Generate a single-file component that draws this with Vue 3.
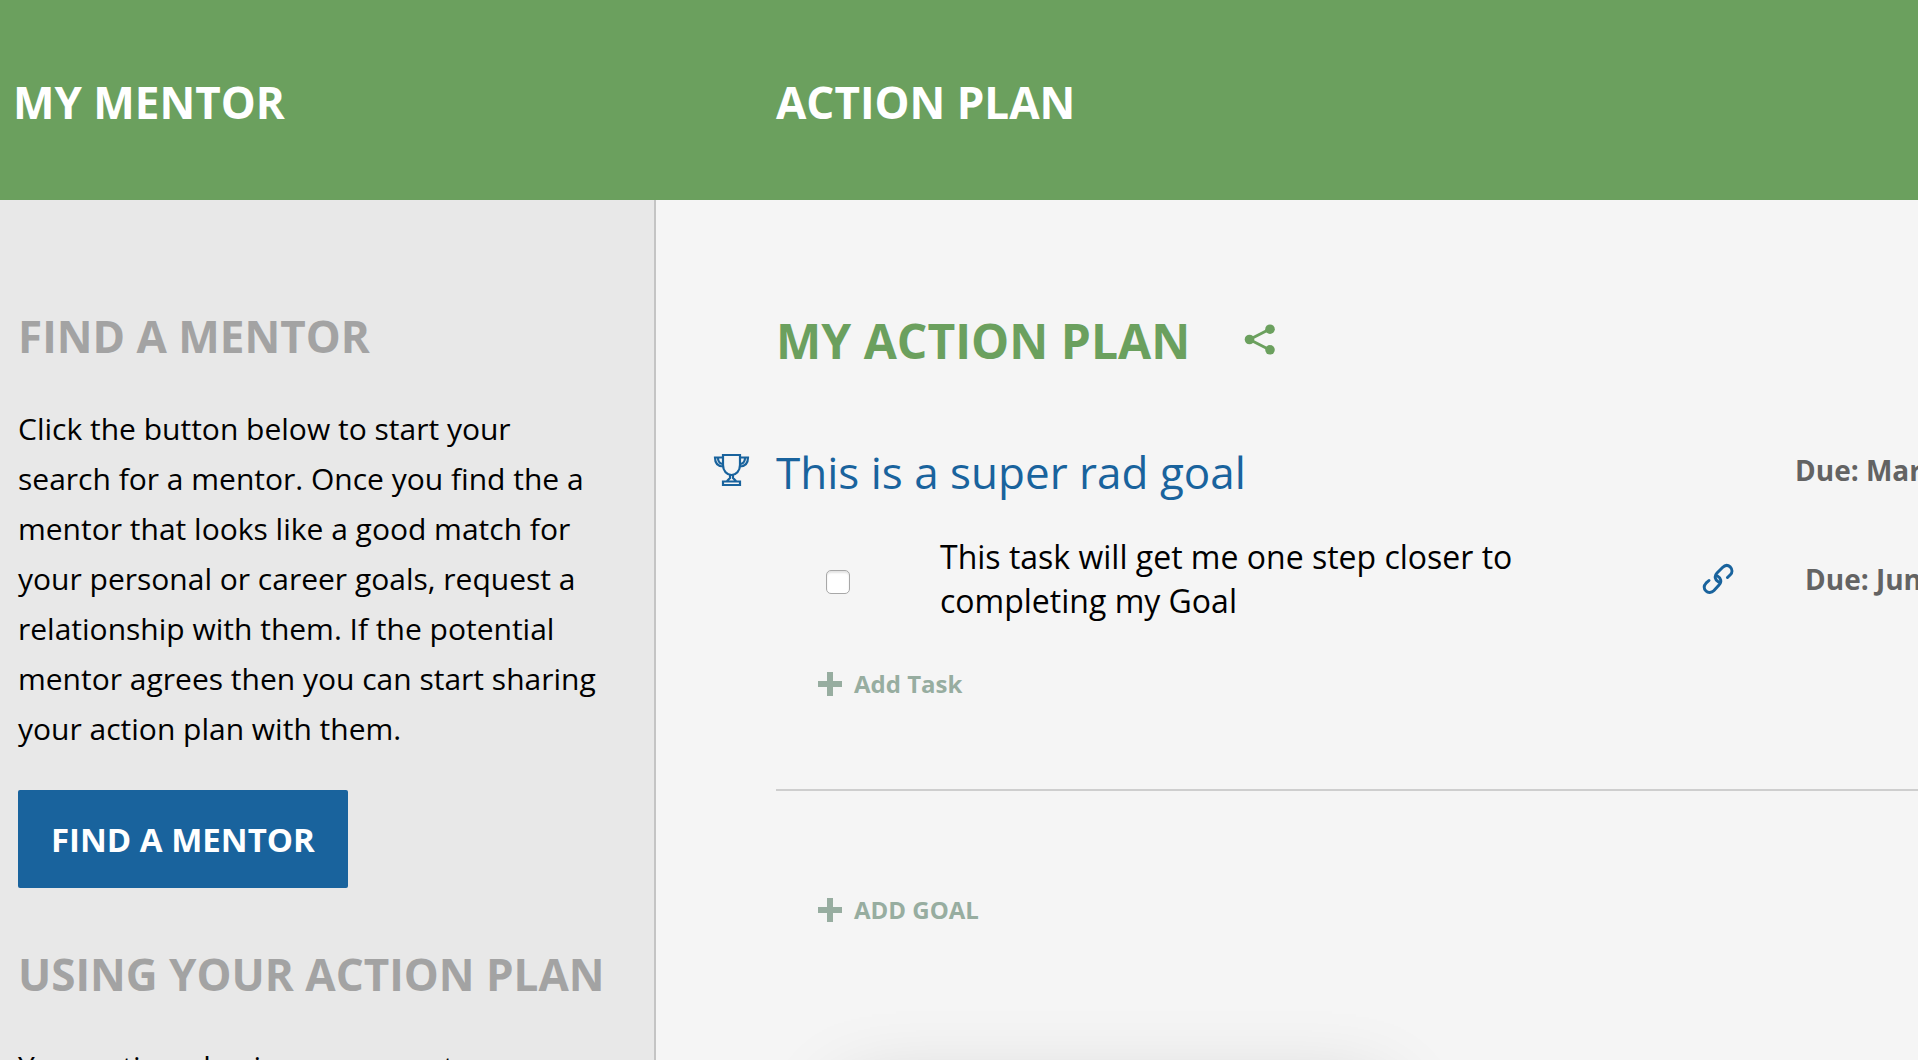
<script setup>
const dueGoal = 'Due: March 31'
const dueTask = 'Due: June 30'
</script>

<template>
  <div class="page">
    <header class="banner">
      <h1 class="banner-title side">My Mentor</h1>
      <h1 class="banner-title main">Action Plan</h1>
    </header>
    <div class="columns">
      <aside class="sidebar">
        <h2 class="side-title">Find a Mentor</h2>
        <p class="side-text">
          Click the button below to start your search for a mentor. Once you find the a mentor that
          looks like a good match for your personal or career goals, request a relationship with
          them. If the potential mentor agrees then you can start sharing your action plan with them.
        </p>
        <button type="button" class="find">Find a Mentor</button>
        <h2 class="side-title using">Using Your Action Plan</h2>
        <p class="side-text">Your action plan is your space to manage your goals.</p>
      </aside>
      <main class="plan">
        <div class="plan-head">
          <h2 class="plan-title">My Action Plan</h2>
          <button type="button" class="icon-button share" aria-label="Share action plan">
            <svg width="32" height="32" viewBox="0 0 32 32" fill="currentColor">
              <path d="M5.500 15.500 26 5M5.500 15.500 26 26" fill="none" stroke="currentColor" stroke-width="3" />
              <circle cx="5.500" cy="15.500" r="4.800" />
              <circle cx="26" cy="5.200" r="4.800" />
              <circle cx="26" cy="25.800" r="4.800" />
            </svg>
          </button>
        </div>
        <section class="goal">
          <div class="goal-row">
            <svg class="trophy" width="38" height="34" viewBox="0 0 38 34" fill="none" stroke="currentColor" stroke-width="2.200">
              <path d="M11 2H28V12C28 18 24 22 19.500 22S11 18 11 12Z" />
              <path d="M11 4.500H3C3 10 5 13.500 11.500 13.500M28 4.500H36C36 10 34 13.500 27.500 13.500" />
              <path d="M6 5C6 8 7 10 10 11M33 5C33 8 32 10 29 11" />
              <path d="M18 22V25L15 28M21 22V25L24 28M11 28.500H28V32H11Z" />
            </svg>
            <h3 class="goal-title">This is a super rad goal</h3>
            <span class="due">{{ dueGoal }}</span>
          </div>
          <div class="task">
            <input id="task-1" type="checkbox" class="tick" />
            <label for="task-1" class="task-text">This task will get me one step closer to completing my Goal</label>
            <button type="button" class="icon-button link" aria-label="Open task link">
              <svg width="34" height="34" viewBox="0 0 34 34" fill="none" stroke="currentColor" stroke-width="3" stroke-linecap="round">
                <path d="M17.500 20C14 18 13 14 16 11L21.500 5.500C24 3 27 3 29.300 5C31.500 7.300 31.500 10.500 29.300 12.800L26.500 15.500" />
                <path d="M16.500 14C20 16 21 20 18 23L13 28.500C10.500 31 7 31 5 29C2.500 26.700 2.700 23.500 5 21.200L8 18.500" />
              </svg>
            </button>
            <span class="due">{{ dueTask }}</span>
          </div>
          <button type="button" class="add">
            <svg width="24" height="24" viewBox="0 0 24 24" fill="currentColor"><path d="M9 0H15V9H24V15H15V24H9V15H0V9H9Z" /></svg>
            Add Task
          </button>
        </section>
        <button type="button" class="add add-goal">
          <svg width="24" height="24" viewBox="0 0 24 24" fill="currentColor"><path d="M9 0H15V9H24V15H15V24H9V15H0V9H9Z" /></svg>
          ADD GOAL
        </button>
        <div class="sheet"></div>
      </main>
    </div>
  </div>
</template>

<style>
body {
  margin: 0;
}
</style>

<style scoped>
.page {
  height: 100vh;
  display: flex;
  flex-direction: column;
  overflow: hidden;
  font-family: 'Open Sans', 'Noto Sans', sans-serif;
  color: #000;
  background: #f5f5f5;
}
h1, h2, h3, p {
  margin: 0;
}
button {
  font-family: inherit;
  border: 0;
  margin: 0;
  cursor: pointer;
}
svg {
  display: block;
}
.banner {
  flex: none;
  display: flex;
  align-items: center;
  padding: 72px 0 68px;
  background: #6ba05e;
  color: #fff;
}
.banner-title {
  font-size: 44px;
  line-height: 60px;
  font-weight: 700;
  text-transform: uppercase;
}
.banner-title.side {
  box-sizing: border-box;
  width: 776px;
  padding-left: 13px;
}
.columns {
  flex: 1;
  min-height: 0;
  display: flex;
}
.sidebar {
  flex: none;
  box-sizing: border-box;
  width: 656px;
  padding: 106px 50px 0 18px;
  background: #e8e8e8;
  border-right: 2px solid #c4c4c4;
}
.side-title {
  font-size: 44px;
  line-height: 60px;
  font-weight: 700;
  color: #a3a3a3;
  text-transform: uppercase;
  white-space: nowrap;
}
.side-text {
  margin-top: 38px;
  font-size: 30px;
  line-height: 50px;
}
.find {
  display: block;
  height: 98px;
  margin-top: 36px;
  padding: 0 33px;
  border-radius: 2px;
  background: #19639d;
  color: #fff;
  font-size: 33px;
  font-weight: 700;
  text-transform: uppercase;
}
.using {
  margin-top: 56px;
}
.plan {
  flex: 1;
  min-width: 0;
  padding: 108px 0 0 120px;
}
.plan-head {
  display: flex;
  align-items: center;
  gap: 54px;
}
.plan-title {
  font-size: 48px;
  line-height: 66px;
  font-weight: 700;
  color: #6ba05e;
  text-transform: uppercase;
}
.icon-button {
  padding: 0;
  background: none;
  color: #6ba05e;
}
.share {
  padding-bottom: 2px;
}
.goal {
  border-bottom: 2px solid #cecece;
  padding-bottom: 88px;
}
.goal-row {
  display: flex;
  align-items: center;
  margin: 64px 0 0 -64px;
  color: #19639d;
}
.trophy {
  margin-right: 26px;
}
.goal-title {
  flex: 1;
  padding-top: 4px;
  font-size: 44px;
  line-height: 60px;
  font-weight: 400;
}
.due {
  flex: none;
  width: 123px;
  overflow: hidden;
  white-space: nowrap;
  font-size: 28px;
  line-height: 38px;
  font-weight: 700;
  color: #636363;
}
.task {
  display: flex;
  align-items: center;
  margin: 33px 0 0 50px;
}
.task .due {
  width: 113px;
}
.tick {
  appearance: none;
  box-sizing: border-box;
  width: 24px;
  height: 24px;
  margin: 6px 90px 0 0;
  border: 1px solid #a8a8a8;
  border-radius: 5px;
  background: #fff;
  box-shadow: inset 0 2px 2px #e4e4e4;
}
.task-text {
  width: 600px;
  margin-right: auto;
  font-size: 32px;
  line-height: 44px;
}
.link {
  margin-right: 70px;
  color: #19639d;
}
.add {
  display: flex;
  align-items: center;
  gap: 12px;
  margin: 44px 0 0 42px;
  padding: 0;
  background: none;
  color: #97ada0;
  font-size: 24px;
  line-height: 34px;
  font-weight: 700;
}
.add-goal {
  margin-top: 102px;
}
.sheet {
  width: 540px;
  height: 400px;
  margin: 148px 0 0 68px;
  background: #fff;
  box-shadow: 0 20px 80px rgba(0, 0, 0, 0.2);
}
</style>
